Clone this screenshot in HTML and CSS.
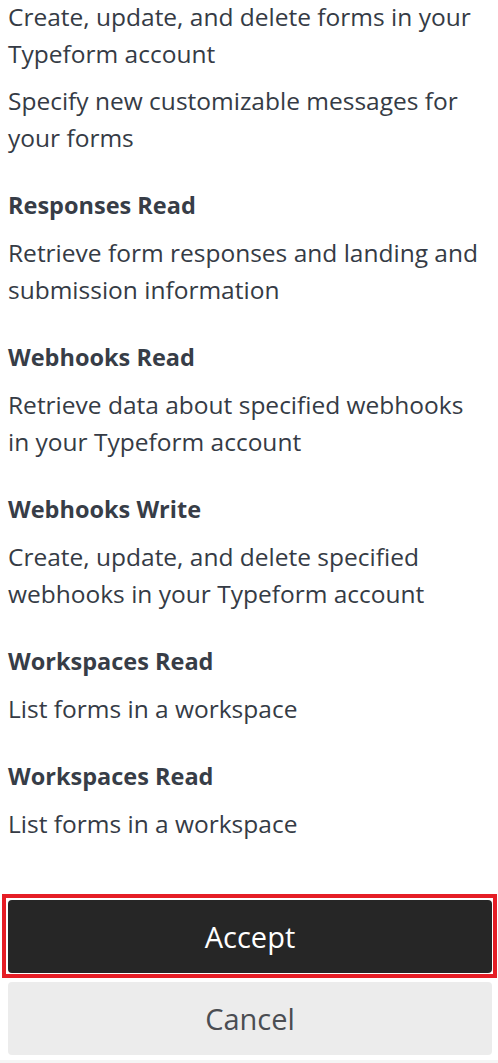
FILE: index.html
```html
<!DOCTYPE html>
<html lang="en">
<head>
<meta charset="utf-8">
<title>Authorize</title>
<link rel="stylesheet" href="styles.css">
</head>
<body>
<main class="page">
  <section class="scopes">
    <div class="scope">
      <p class="desc">Create, update, and delete forms in your Typeform account</p>
      <p class="desc">Specify new customizable messages for your forms</p>
    </div>
    <div class="scope">
      <h3 class="title">Responses Read</h3>
      <p class="desc">Retrieve form responses and landing and submission information</p>
    </div>
    <div class="scope">
      <h3 class="title">Webhooks Read</h3>
      <p class="desc">Retrieve data about specified webhooks in your Typeform account</p>
    </div>
    <div class="scope">
      <h3 class="title">Webhooks Write</h3>
      <p class="desc">Create, update, and delete specified webhooks in your Typeform account</p>
    </div>
    <div class="scope">
      <h3 class="title">Workspaces Read</h3>
      <p class="desc">List forms in a workspace</p>
    </div>
    <div class="scope">
      <h3 class="title">Workspaces Read</h3>
      <p class="desc">List forms in a workspace</p>
    </div>
  </section>
  <div class="actions">
    <button class="btn btn-accept" type="button">Accept</button>
    <button class="btn btn-cancel" type="button">Cancel</button>
  </div>
</main>
<div class="footer-strip"></div>
</body>
</html>
```
FILE: styles.css
```css
html, body {
  margin: 0;
  padding: 0;
  background: #ffffff;
}
body {
  font-family: "Open Sans", "Liberation Sans", sans-serif;
  color: #353b45;
  width: 498px;
  height: 1063px;
  overflow: hidden;
}
.page {
  padding: 0 6px 0 8px;
}
.scopes {
  display: flex;
  flex-direction: column;
  gap: 31px;
  margin-top: -2px;
  padding-right: 6px;
}
.scope {
  display: flex;
  flex-direction: column;
  gap: 10px;
}
.title {
  margin: 0;
  font-size: 23.5px;
  line-height: 37px;
  font-weight: 700;
  color: #373d47;
}
.desc {
  margin: 0;
  font-size: 24.5px;
  line-height: 37px;
  font-weight: 400;
}
.actions {
  display: flex;
  flex-direction: column;
  gap: 9px;
  margin-top: 58px;
}
.btn {
  position: relative;
  display: block;
  width: 484px;
  height: 73px;
  border: none;
  border-radius: 4px;
  font-family: "Open Sans", "Liberation Sans", sans-serif;
  font-size: 29px;
  padding: 0;
  cursor: pointer;
}
.btn-accept {
  background: #262626;
  color: #ffffff;
}
.btn-accept::after {
  content: "";
  position: absolute;
  top: -6px;
  left: -6px;
  right: -5px;
  bottom: -5px;
  border: 4px solid #e51d25;
  pointer-events: none;
}
.btn-cancel {
  background: #ececec;
  color: #4a4d52;
}
.footer-strip {
  position: absolute;
  left: 0;
  right: 0;
  top: 1060px;
  height: 3px;
  background: #f5f5f5;
}
```
